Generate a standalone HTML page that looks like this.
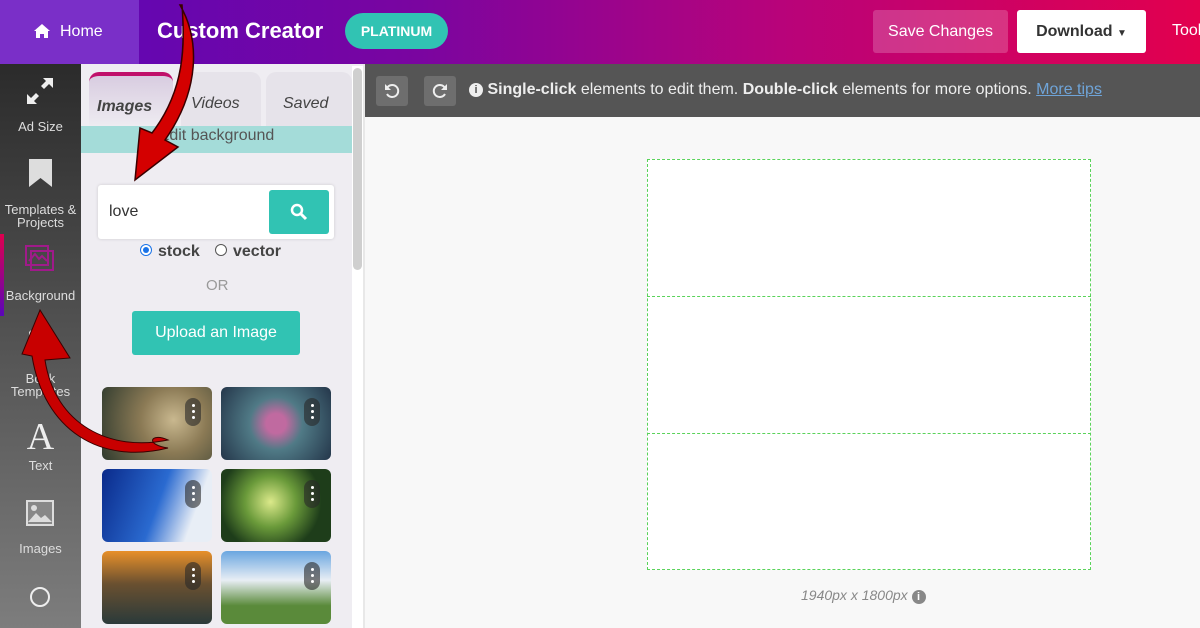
<!DOCTYPE html>
<html><head><style>
*{margin:0;padding:0;box-sizing:border-box}
body{width:1200px;height:628px;overflow:hidden;font-family:"Liberation Sans",sans-serif;background:#f8f8f8;position:relative}
.top{position:absolute;left:0;top:0;width:1200px;height:64px;background:linear-gradient(90deg,#5a06b8 0%,#7a05a0 35%,#b8037a 65%,#e2004e 100%)}
.home{position:absolute;left:0;top:0;width:139px;height:64px;background:#7a2fc8;color:#fff;font-size:16px;line-height:64px;padding-left:60px}
.title{position:absolute;left:157px;top:18px;color:#fff;font-size:22px;font-weight:bold}
.plat{position:absolute;left:345px;top:13px;width:103px;height:36px;border-radius:18px;background:#31c3b3;color:#fff;font-weight:bold;font-size:14px;text-align:center;line-height:36px}
.save{position:absolute;left:873px;top:10px;width:135px;height:43px;border-radius:3px;background:rgba(255,255,255,.2);color:#fff;font-size:16px;text-align:center;line-height:43px}
.dl{position:absolute;left:1017px;top:10px;width:129px;height:43px;border-radius:3px;background:#fff;color:#333;font-weight:bold;font-size:16px;text-align:center;line-height:43px}
.side{position:absolute;left:0;top:64px;width:81px;height:564px;background:linear-gradient(#2b2b2b,#7d7d7d)}
.si{position:absolute;left:0;width:81px;text-align:center;color:#ddd;font-size:13px;line-height:13px}
.panel{position:absolute;left:81px;top:64px;width:282px;height:564px;background:#efedf2}
.tb{position:absolute;left:365px;top:64px;width:835px;height:53px;background:#555;color:#eee;font-size:16px}
.ib{position:absolute;top:12px;width:32px;height:30px;background:#6e6e6e;border-radius:3px}
.img{position:absolute;width:110px;height:73px;border-radius:6px}
.dots{position:absolute;right:11px;top:11px;width:16px;height:28px;border-radius:8px;background:rgba(40,40,40,.6);padding-top:3px}
.dots i{display:block;width:3px;height:3px;background:#fff;border-radius:50%;margin:3px auto 0}
</style></head><body>
<div class="top"></div>
<div class="home"><svg style="position:absolute;left:34px;top:24px" width="16" height="14" viewBox="0 0 16 14"><path d="M8 0L0 7h2v7h4v-4h4v4h4V7h2z" fill="#fff"/></svg>Home</div>
<div class="title">Custom Creator</div>
<div class="plat">PLATINUM</div>
<div class="save">Save Changes</div>
<div class="dl">Download <span style="font-size:10px">▼</span></div>
<div style="position:absolute;left:1172px;top:22px;color:#fff;font-size:16px">Tools</div>

<div class="side">
<svg style="position:absolute;left:25px;top:12px" width="30" height="30" viewBox="0 0 30 30"><path d="M18 2h10v10l-4-4-5 5-3-3 5-5zM12 28H2V18l4 4 5-5 3 3-5 5z" fill="#eee"/></svg>
<div class="si" style="top:56px">Ad Size</div>
<svg style="position:absolute;left:29px;top:95px" width="23" height="28"><path d="M0 0h23v28l-11.5-9L0 28z" fill="#ddd"/></svg>
<div class="si" style="top:139px;line-height:13px">Templates &amp;<br>Projects</div>
<div style="position:absolute;left:0;top:170px;width:4px;height:82px;background:linear-gradient(#e0004e,#5a06b8)"></div>
<svg style="position:absolute;left:25px;top:181px" width="30" height="28"><rect x="1" y="1" width="22" height="19" fill="none" stroke="#a01a8a" stroke-width="2"/><rect x="6" y="6" width="22" height="19" fill="none" stroke="#a01a8a" stroke-width="2"/><path d="M4 16l6-7 4 5 3-3 5 5" stroke="#a01a8a" stroke-width="2" fill="none"/></svg>
<div class="si" style="top:225px">Background</div>
<svg style="position:absolute;left:27px;top:262px" width="28" height="28"><path d="M2 6 Q8 0 14 4 Q20 0 26 6 V26 Q20 22 14 26 Q8 22 2 26Z" fill="#ddd"/></svg>
<div class="si" style="top:308px">Book<br>Templates</div>
<div class="si" style="top:354px;font-family:'Liberation Serif',serif;font-size:38px;line-height:38px;color:#eee">A</div>
<div class="si" style="top:395px">Text</div>
<svg style="position:absolute;left:26px;top:436px" width="28" height="26"><rect width="28" height="26" fill="#ddd"/><rect x="2" y="2" width="24" height="22" fill="#888"/><path d="M2 22l8-9 5 5 4-3 7 7z" fill="#ddd"/><circle cx="8" cy="8" r="3" fill="#ddd"/></svg>
<div class="si" style="top:478px">Images</div>
<div style="position:absolute;left:30px;top:523px;width:20px;height:20px;border:2px solid #eee;border-radius:50%"></div>
</div>

<div class="panel">
<div style="position:absolute;left:8px;top:8px;width:84px;height:56px;background:linear-gradient(#d8cce0,#efedf2);border-top:4px solid #c0106a;border-radius:10px 10px 0 0"></div>
<div style="position:absolute;left:100px;top:8px;width:80px;height:56px;background:#e6e3ea;border-radius:10px 10px 0 0"></div>
<div style="position:absolute;left:185px;top:8px;width:86px;height:56px;background:#e6e3ea;border-radius:10px 10px 0 0"></div>
<div style="position:absolute;left:16px;top:34px;font-size:16px;font-weight:bold;font-style:italic;color:#444">Images</div>
<div style="position:absolute;left:110px;top:31px;font-size:16px;font-style:italic;color:#444">Videos</div>
<div style="position:absolute;left:202px;top:31px;font-size:16px;font-style:italic;color:#444">Saved</div>
<div style="position:absolute;left:0;top:62px;width:271px;height:27px;background:#a4dcd9;color:#555;font-size:16px;text-align:center;line-height:16px;padding-top:2px">Edit background</div>
<div style="position:absolute;left:271px;top:2px;width:11px;height:562px;background:#fff"></div>
<div style="position:absolute;left:272px;top:4px;width:9px;height:202px;background:#cfcfcf;border-radius:5px"></div>
<div style="position:absolute;left:17px;top:121px;width:236px;height:54px;background:#fff;border-radius:3px;box-shadow:0 0 3px rgba(0,0,0,.15)"></div>
<div style="position:absolute;left:28px;top:139px;font-size:16px;color:#333">love</div>
<div style="position:absolute;left:188px;top:126px;width:60px;height:44px;background:#31c3b3;border-radius:3px"><svg style="position:absolute;left:21px;top:13px" width="18" height="18"><circle cx="7" cy="7" r="5" fill="none" stroke="#fff" stroke-width="2.5"/><path d="M11 11l5 5" stroke="#fff" stroke-width="3"/></svg></div>
<div style="position:absolute;left:59px;top:180px;width:12px;height:12px;border-radius:50%;border:1px solid #1a73e8;background:#fff"><div style="width:6px;height:6px;margin:2px;border-radius:50%;background:#1a73e8"></div></div>
<div style="position:absolute;left:77px;top:179px;font-size:16px;font-weight:bold;color:#444">stock</div>
<div style="position:absolute;left:134px;top:180px;width:12px;height:12px;border-radius:50%;border:1px solid #555;background:#fff"></div>
<div style="position:absolute;left:152px;top:179px;font-size:16px;font-weight:bold;color:#444">vector</div>
<div style="position:absolute;left:125px;top:213px;font-size:15px;color:#999">OR</div>
<div style="position:absolute;left:51px;top:247px;width:168px;height:44px;background:#31c3b3;border-radius:3px;color:#fff;font-size:16px;text-align:center;line-height:44px">Upload an Image</div>
<div class="img" style="left:21px;top:323px;background:radial-gradient(circle at 65% 45%,#c9b88f,#8b7a55 40%,#2f3a2e)"><div class="dots"><i></i><i></i><i></i></div></div>
<div class="img" style="left:140px;top:323px;background:radial-gradient(circle at 50% 50%,#c06aa0 15%,#507a86 40%,#24364a)"><div class="dots"><i></i><i></i><i></i></div></div>
<div class="img" style="left:21px;top:405px;background:linear-gradient(110deg,#0a2a8a,#2a6ad0 50%,#e8eef6 80%)"><div class="dots"><i></i><i></i><i></i></div></div>
<div class="img" style="left:140px;top:405px;background:radial-gradient(circle at 45% 45%,#dbe98a,#6a9a3a 35%,#1e3d1a 70%)"><div class="dots"><i></i><i></i><i></i></div></div>
<div class="img" style="left:21px;top:487px;background:linear-gradient(#e8902a,#6a5030 45%,#2a3a3a)"><div class="dots"><i></i><i></i><i></i></div></div>
<div class="img" style="left:140px;top:487px;background:linear-gradient(#6aa6e0,#e8eef4 40%,#5a8a3a 75%)"><div class="dots"><i></i><i></i><i></i></div></div>
</div>

<div class="tb">
<div class="ib" style="left:11px"><svg style="position:absolute;left:8px;top:7px" width="16" height="16"><path d="M3 5a6 6 0 1 1 0 6" fill="none" stroke="#eee" stroke-width="2"/><path d="M1 1v6h6z" fill="#eee"/></svg></div>
<div class="ib" style="left:59px"><svg style="position:absolute;left:8px;top:7px" width="16" height="16"><path d="M13 5a6 6 0 1 0 0 6" fill="none" stroke="#eee" stroke-width="2"/><path d="M15 1v6H9z" fill="#eee"/></svg></div>
<div style="position:absolute;left:104px;top:17px;white-space:nowrap"><span style="display:inline-block;width:14px;height:14px;border-radius:50%;background:#eee;color:#555;font-size:11px;font-weight:bold;text-align:center;line-height:14px;vertical-align:1px">i</span> <b>Single-click</b> elements to edit them. <b>Double-click</b> elements for more options. <u style="color:#6fa4d8">More tips</u></div>
</div>
<div style="position:absolute;left:363px;top:64px;width:2px;height:564px;background:#e8e8e8"></div>

<div style="position:absolute;left:647px;top:159px;width:444px;height:411px;background:#fff;border:1px dashed #5ad35a"></div>
<div style="position:absolute;left:647px;top:296px;width:444px;border-top:1px dashed #5ad35a"></div>
<div style="position:absolute;left:647px;top:433px;width:444px;border-top:1px dashed #5ad35a"></div>
<div style="position:absolute;left:801px;top:587px;font-size:14px;font-style:italic;color:#888">1940px x 1800px <span style="display:inline-block;width:14px;height:14px;border-radius:50%;background:#888;color:#fff;font-size:11px;font-style:normal;font-weight:bold;text-align:center;line-height:14px">i</span></div>

<svg style="position:absolute;left:0;top:0" width="360" height="628">
<path d="M180 5 C200 40,200 90,165 140 L178 147 L135 180 L140 128 L152 133 C185 90,185 45,182 5 Z" fill="#d40000" stroke="#3a0000" stroke-width="1.5"/>
<path d="M168 440 C110 452,55 425,45 360 L70 358 L40 310 L22 354 L32 356 C44 430,100 465,168 448 C145 445,150 432,168 440 Z" fill="#c80000" stroke="#3a0000" stroke-width="1"/>
</svg>
</body></html>
